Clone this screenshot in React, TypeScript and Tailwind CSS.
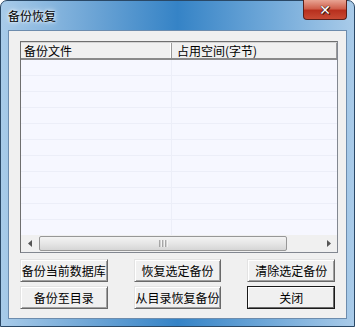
import React from "react";

const FONT = { fontFamily: '"Noto Sans CJK SC", "Noto Sans", sans-serif' };

function Btn({ label, isDefault }: { label: string; isDefault?: boolean }) {
  if (isDefault) {
    return (
      <div className="h-[23px] w-[88px] border border-[#1a1a1a]">
        <button className="h-full w-full flex items-center justify-center text-[12px] leading-none text-black bg-[#f0f0f0] border border-t-[#ffffff] border-l-[#ffffff] border-r-[#696969] border-b-[#696969]">
          {label}
        </button>
      </div>
    );
  }
  return (
    <button className="h-[23px] w-[88px] flex items-center justify-center text-[12px] leading-none text-black bg-[#f0f0f0] border border-t-[#e3e3e3] border-l-[#e3e3e3] border-r-[#696969] border-b-[#696969] shadow-[inset_1px_1px_0_#ffffff,inset_-1px_-1px_0_#a0a0a0]">
      {label}
    </button>
  );
}

export default function App() {
  const rows = Array.from({ length: 11 });
  return (
    <div className="w-[355px] h-[327px] bg-white" style={FONT}>
      <div className="relative w-[355px] h-[327px] rounded-t-[7px] border border-[#2a4866] bg-[linear-gradient(90deg,#a8cbe9,#6fa6d6_25%,#3583c6_50%,#6ea7d8_75%,#a9cbe9)] flex flex-col">
        {/* Title bar */}
        <div className="h-[29px] flex items-center pl-[7px]">
          <span className="text-[12px] text-black [text-shadow:0_0_6px_#ffffff,0_0_3px_#ffffff]">备份恢复</span>
        </div>

        {/* Close button */}
        <div className="absolute top-[-1px] right-[7px] w-[44px] h-[20px] rounded-b-[4px] border border-[#5a1f1a] border-t-0 bg-[linear-gradient(#e8a493,#d0604c_45%,#b8301e_55%,#c84a34)] flex items-center justify-center">
          <span className="text-[14px] font-bold leading-none text-white [text-shadow:0_0_1px_#30100c,0_0_1px_#30100c,1px_1px_0_#4a1a14]" style={{ fontFamily: '"DejaVu Sans", sans-serif' }}>
            ✕
          </span>
        </div>

        {/* Client area */}
        <div className="mx-[7px] h-[289px] bg-[#f0f0f0] border border-[#6d8cad] flex flex-col px-[11px] pt-[10px]">
          {/* List box */}
          <div className="w-[318px] h-[212px] border border-[#828790] border-l-[#6f6f6f] border-t-[#6f6f6f] bg-[#f6f7ff] flex flex-col overflow-hidden">
            <div className="h-[18px] flex bg-[#f0f0f0] border-t border-[#d4d4d4] border-b-2 border-b-[#8a8a8a] text-[12px] leading-none">
              <div className="w-[151px] flex items-center pl-[3px] border-r border-[#9a9a9a] shadow-[inset_-1px_0_0_#ffffff]">备份文件</div>
              <div className="flex-1 flex items-center pl-[5px] border-r border-[#9a9a9a]">占用空间(字节)</div>
            </div>
            <div className="flex-1 relative overflow-hidden">
              {rows.map((_, i) => (
                <div key={i} className="h-[16px] flex border-b border-[#eceef8]">
                  <div className="w-[151px] border-r border-[#eceef8]" />
                  <div className="flex-1" />
                </div>
              ))}
            </div>
            {/* Horizontal scrollbar */}
            <div className="h-[17px] flex bg-[#f0f0f0] items-stretch">
              <div className="w-[17px] flex items-center justify-center">
                <svg width="4" height="7" viewBox="0 0 4 7"><path d="M4 0 L0 3.5 L4 7 Z" fill="#555" /></svg>
              </div>
              <div className="flex-1 flex items-center px-[1px]">
                <div className="w-[248px] h-[15px] rounded-[2px] border border-[#979797] bg-[linear-gradient(#f3f3f3,#e6e6e6_50%,#d6d6d6)] flex items-center justify-center">
                  <svg width="9" height="7" viewBox="0 0 9 7">
                    <path d="M1 0v7M4 0v7M7 0v7" stroke="#666" strokeWidth="1" />
                    <path d="M2 0v7M5 0v7M8 0v7" stroke="#fff" strokeWidth="1" />
                  </svg>
                </div>
                <div className="flex-1" />
              </div>
              <div className="w-[17px] flex items-center justify-center">
                <svg width="4" height="7" viewBox="0 0 4 7"><path d="M0 0 L4 3.5 L0 7 Z" fill="#555" /></svg>
              </div>
            </div>
          </div>

          {/* Buttons */}
          <div className="mt-[6px] flex gap-[26px]">
            <Btn label="备份当前数据库" />
            <Btn label="恢复选定备份" />
            <Btn label="清除选定备份" />
          </div>
          <div className="mt-[4px] flex gap-[26px]">
            <Btn label="备份至目录" />
            <Btn label="从目录恢复备份" />
            <Btn label="关闭" isDefault />
          </div>
        </div>
      </div>
    </div>
  );
}
